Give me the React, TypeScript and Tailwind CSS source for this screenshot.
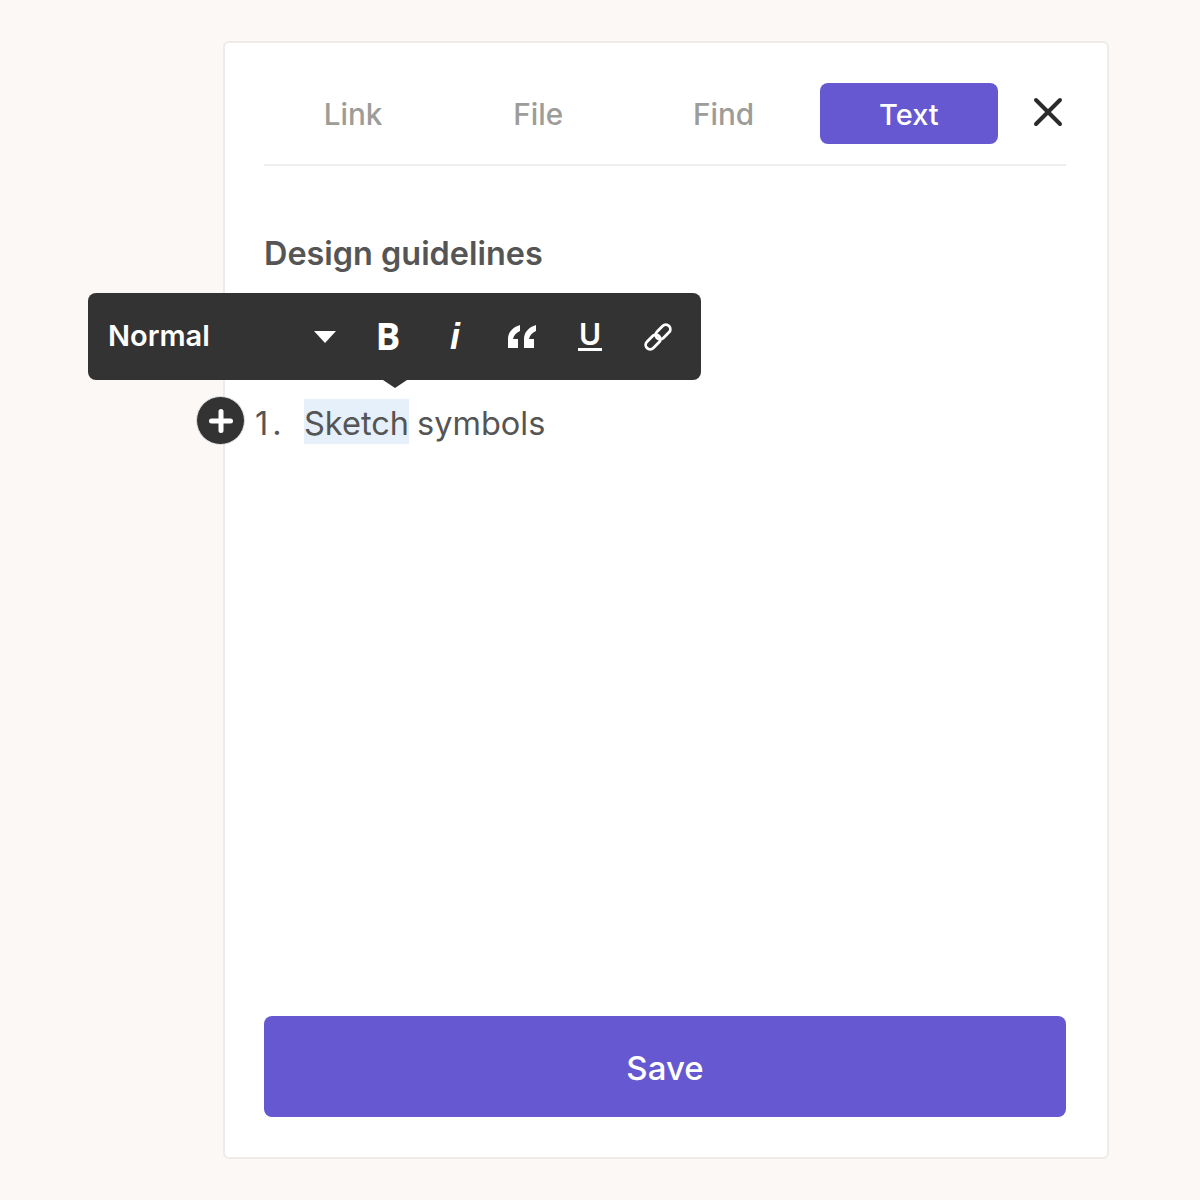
const tabs = ["Link", "File", "Find"];

export default function App() {
  return (
    <div className="min-h-[1200px] bg-[#fcf8f5] pl-[223px] pt-[41px] font-['Inter',sans-serif]">
      <div className="relative flex h-[1118px] w-[886px] flex-col rounded-[6px] border-2 border-[#eeece8] bg-white pb-[40px] pl-[39px] pr-[41px] pt-[40px]">
        {/* tabs */}
        <div className="flex items-center border-b-2 border-[#eeeeec] pb-[20px]">
          {tabs.map((t) => (
            <div
              key={t}
              className="mr-[7.3px] flex h-[61px] w-[178px] items-center justify-center pt-[1px] text-[29.7px] font-medium text-[#9c9c98]"
            >
              {t}
            </div>
          ))}
          <div className="flex h-[61px] w-[178px] items-center justify-center rounded-[8px] bg-[#6558d0] pt-[2px] text-[29px] font-medium text-white">
            Text
          </div>
          <div className="ml-[32px] flex h-[61px] w-[36px] items-center justify-center pb-[3px]">
            <svg width="32" height="32" viewBox="0 0 32 32" className="shrink-0">
              <path d="M4 4l24 24M28 4L4 28" stroke="#2b2b2b" strokeWidth="4" strokeLinecap="round" />
            </svg>
          </div>
        </div>

        <h2 className="mt-[68px] text-[32.4px] font-semibold leading-[40px] text-[#555555]">
          Design guidelines
        </h2>

        {/* editor line */}
        <div className="mt-[125px] ml-[-9px] flex h-[46px] items-center text-[32.5px] text-[#555555]">
          <span className="w-[49px] pt-[5px] tracking-[4px]">1.</span>
          <span className="mt-[-2px] flex h-[45px] items-center bg-[#e6f0fa] pt-[7px]">Sketch</span>
          <span className="ml-[8px] pt-[5px]">symbols</span>
        </div>

        <button className="mt-auto flex h-[101px] w-full items-center justify-center rounded-[8px] bg-[#6558d0] pt-[4px] text-[33px] font-medium text-white">
          Save
        </button>

        {/* floating toolbar */}
        <div className="absolute left-[-137px] top-[250px] flex h-[87px] w-[613px] items-center rounded-[8px] bg-[#333333] pl-[20px] text-white">
          <span className="mt-[-2px] w-[206px] text-[29px] font-semibold">Normal</span>
          <svg width="22" height="12" viewBox="0 0 22 12" className="mr-[39px]">
            <path d="M0 0h22L11 12z" fill="#fff" />
          </svg>
          <span className="mt-[-3px] w-[26px] text-center font-['Open_Sans',sans-serif] text-[37px] font-bold leading-none">B</span>
          <span className="ml-[41px] w-[26px] text-center font-['Liberation_Sans',sans-serif] text-[36px] font-bold italic leading-none">
            i
          </span>
          <svg width="29" height="23" viewBox="0 0 29 23" className="ml-[40px]">
            <path
              d="M12 0C5 2 0 7 0 14v9h10v-9H5c1-4 3-6 7-8zM28 0c-7 2-12 7-12 14v9h10v-9h-5c1-4 3-6 7-8z"
              fill="#fff"
            />
          </svg>
          <span className="ml-[40px] flex w-[26px] flex-col items-center">
            <span className="text-[30px] font-semibold leading-[24px]">U</span>
            <span className="mt-[2px] h-[3px] w-[24px] bg-white" />
          </span>
          <svg width="30" height="30" viewBox="0 0 30 30" fill="none" stroke="#fff" strokeWidth="2.8" className="ml-[40px]">
            <rect x="1.5" y="15.5" width="17" height="9" rx="4.5" transform="rotate(-45 10 20)" />
            <rect x="11.5" y="5.5" width="17" height="9" rx="4.5" transform="rotate(-45 20 10)" />
          </svg>
          <div className="absolute left-[295px] top-[87px] h-0 w-0 border-x-[12px] border-t-[8px] border-x-transparent border-t-[#333333]" />
        </div>

        {/* add block button */}
        <div className="absolute left-[-29px] top-[353px] flex h-[49px] w-[49px] items-center justify-center rounded-full border border-[#e5e5e5] bg-[#333333]">
          <svg width="26" height="26" viewBox="0 0 26 26">
            <path d="M13 3.5v19M3.5 13h19" stroke="#fff" strokeWidth="5" strokeLinecap="round" />
          </svg>
        </div>
      </div>
    </div>
  );
}
